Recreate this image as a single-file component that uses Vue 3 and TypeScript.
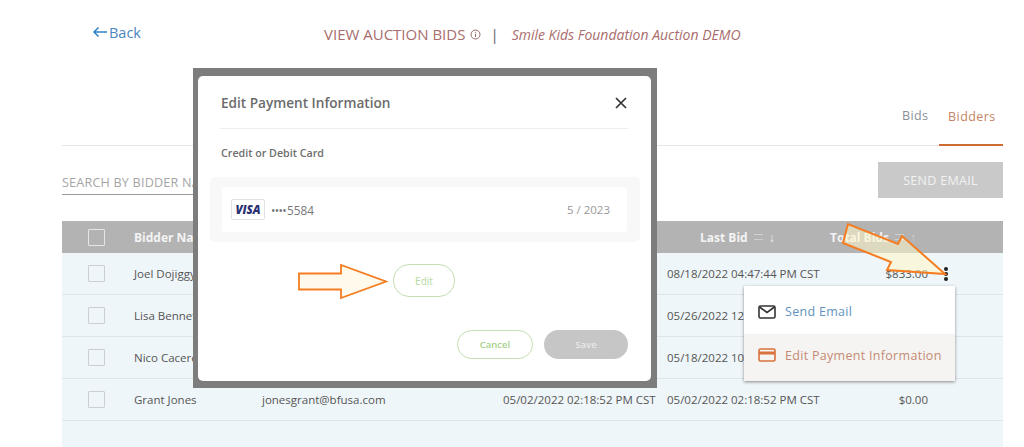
<script setup lang="ts">
interface Row { name: string; email: string; first: string; last: string; total: string; menu?: boolean }
const rows: Row[] = [
  { name: 'Joel Dojiggy', email: '', first: '', last: '08/18/2022 04:47:44 PM CST', total: '$833.00', menu: true },
  { name: 'Lisa Bennett', email: '', first: '', last: '05/26/2022 12', total: '' },
  { name: 'Nico Caceres', email: '', first: '', last: '05/18/2022 10', total: '' },
  { name: 'Grant Jones', email: 'jonesgrant@bfusa.com', first: '05/02/2022 02:18:52 PM CST', last: '05/02/2022 02:18:52 PM CST', total: '$0.00' },
]
</script>

<template>
  <div class="page">
    <header class="top">
      <a class="back"><svg class="back-arrow" width="16" height="12" viewBox="0 0 16 12"><path d="M15 6H2M6.500 1.500 2 6l4.500 4.500" fill="none" stroke="#2f80c8" stroke-width="1.500"/></svg>Back</a>
      <div class="title">
        <span>VIEW AUCTION BIDS</span>
        <svg class="info" width="11" height="11" viewBox="0 0 11 11"><circle cx="5.500" cy="5.500" r="4.500" fill="none" stroke="#9a6a6a"/><path d="M5.500 3v.8M5.500 4.800V8" stroke="#9a6a6a"/></svg>
        <span class="sep">|</span>
        <em>Smile Kids Foundation Auction DEMO</em>
      </div>
    </header>

    <main class="content">
      <nav class="tabs">
        <span class="tab">Bids</span>
        <span class="tab active">Bidders</span>
      </nav>

      <div class="tools">
        <div class="search">SEARCH BY BIDDER NAME</div>
        <button class="send">SEND EMAIL</button>
      </div>

      <section class="table">
        <div class="row head">
          <span class="check"></span>
          <span>Bidder Name</span>
          <span>Email</span>
          <span>First Bid</span>
          <span class="sort last-head">Last Bid <i class="lines"></i> <b>↓</b></span>
          <span class="sort total-head">Total Bids <i class="lines"></i> <b class="dim">↑</b></span>
        </div>
        <div v-for="r in rows" :key="r.name" class="row body">
          <span class="check"></span>
          <span>{{ r.name }}</span>
          <span>{{ r.email }}</span>
          <span>{{ r.first }}</span>
          <span>{{ r.last }}</span>
          <span class="total">{{ r.total }}</span>
          <span v-if="r.menu" class="dots"><i></i><i></i><i></i></span>
        </div>
      </section>
    </main>

    <div class="menu">
      <div class="menu-item first">
        <svg width="18" height="14" viewBox="0 0 18 14"><rect x="1" y="1" width="16" height="12" rx="1.500" fill="none" stroke="#333" stroke-width="1.600"/><path d="M1.500 2 9 7.500 16.500 2" fill="none" stroke="#333" stroke-width="1.600"/></svg>
        <span class="send-link">Send Email</span>
      </div>
      <div class="menu-item hover">
        <svg width="18" height="14" viewBox="0 0 18 14"><rect x="1" y="1" width="16" height="12" rx="1.500" fill="none" stroke="#d9713c" stroke-width="1.600"/><rect x="1" y="3.500" width="16" height="3" fill="#d9713c"/></svg>
        <span>Edit Payment Information</span>
      </div>
    </div>

    <svg class="arrow-tr" width="112" height="60" viewBox="0 0 112 60">
      <path d="M6 2 1 21 49 40 45 48 103 52 60 14 56 22Z" fill="#fff8c8" fill-opacity=".55" stroke="#f57c20" stroke-width="2"/>
    </svg>

    <div class="frame">
      <div class="modal">
        <div class="modal-head">
          <h2>Edit Payment Information</h2>
          <svg class="close" width="14" height="14" viewBox="0 0 14 14"><path d="M2 2 12 12M12 2 2 12" stroke="#333" stroke-width="1.700"/></svg>
        </div>
        <h3>Credit or Debit Card</h3>
        <div class="card-band">
          <div class="card">
            <span class="visa">VISA</span>
            <span class="num"><span class="bullets">••••</span>5584</span>
            <span class="exp">5 / 2023</span>
          </div>
        </div>
        <div class="edit-line"><button class="pill edit">Edit</button></div>
        <div class="actions">
          <button class="pill cancel">Cancel</button>
          <button class="pill save">Save</button>
        </div>
      </div>
    </div>

    <svg class="arrow-edit" width="90" height="36" viewBox="0 0 90 36">
      <path d="M1 9.500H43V1L88 17.500 43 34V25.500H1Z" fill="#fffaec" stroke="#f57c20" stroke-width="1.800"/>
    </svg>
  </div>
</template>

<style>
html, body { margin: 0; background: #fff; }
</style>

<style scoped>
.page {
  position: relative;
  width: 1024px;
  height: 447px;
  overflow: hidden;
  background: #fff;
  font-family: "Open Sans", sans-serif;
  color: #555;
}
.top { display: grid; grid-template-columns: 232px 1fr; height: 68px; padding-left: 92px; }
.back {
  display: flex; align-items: center; gap: 1px; height: 20px; margin-top: 22px;
  color: #4a86c0; font-size: 14.500px; width: max-content;
}
.back-arrow { flex: none; }
.title {
  display: flex; align-items: center; height: 20px; margin-top: 24px;
  color: #a96d6d; font-size: 15px; white-space: nowrap;
}
.info { margin-left: 5px; }
.sep { margin: 0 13px 0 9px; color: #666; }
.title em { font-size: 14px; }
.content { padding: 0 21px 0 62px; }
.tabs {
  display: flex; justify-content: flex-end; align-items: flex-end;
  box-sizing: border-box; height: 78px; border-bottom: 1px solid #e6e6e6;
}
.tab {
  height: 42px; box-sizing: border-box; font-size: 12.500px; color: #8a8f94; letter-spacing: .35px;
  padding-top: 4px; width: 37px;
}
.tab.active {
  width: 64px; padding-left: 9px; color: #c48465; border-bottom: 2px solid #cf6c32; margin-bottom: -1px; letter-spacing: .45px;
}
.tools {
  display: flex; justify-content: space-between; align-items: flex-start;
  height: 75px; padding-top: 16px; box-sizing: border-box;
}
.search {
  width: 150px; height: 33px; line-height: 42px; box-sizing: border-box; border-bottom: 1px solid #999;
  color: #a5a5a5; font-size: 12.600px; white-space: nowrap; letter-spacing: .2px;
}
.send {
  width: 125px; height: 36px; border: 0; padding: 0; background: #c9c9c9; color: #f2f2f2;
  font: 12.500px "Open Sans", sans-serif; letter-spacing: .3px;
}
.table { background: #eff6f9; height: 226px; }
.row {
  position: relative; display: grid; align-items: center;
  grid-template-columns: 46px 128px 241px 164px 218px 1fr;
  box-sizing: border-box; padding-left: 26px;
  font-size: 11.500px; white-space: nowrap;
}
.head { height: 32px; background: #b3b3b3; color: #f4f4f4; font-weight: 700; font-size: 12px; }
.body { height: 42px; border-bottom: 1px solid #dde6ea; color: #555; }
.check {
  width: 17px; height: 17px; box-sizing: border-box; border: 1px solid #c9cfd2; background: #eff6f9; border-radius: 1px;
}
.head .check { background: #b3b3b3; border-color: #e6e6e6; }
.total { width: 43px; text-align: right; }
.sort { display: flex; align-items: center; gap: 6px; }
.sort b { font-weight: 400; color: #f4f4f4; }
.sort b.dim { color: #cfcfcf; }
.lines { display: inline-block; width: 9px; height: 4px; border-top: 1px solid #cfcfcf; border-bottom: 1px solid #cfcfcf; }
.last-head { margin-left: 33px; }
.total-head { margin-left: -55px; }
.dots {
  position: absolute; left: 882px; top: 14px; display: flex; flex-direction: column; gap: 1px;
}
.dots i { display: block; width: 4px; height: 4px; border-radius: 50%; background: #222; }
.menu {
  position: absolute; left: 744px; top: 286px; width: 211px; height: 95px; background: #fff;
  box-shadow: 0 1px 3px rgba(0, 0, 0, .45); display: flex; flex-direction: column; font-size: 12.500px;
}
.menu-item {
  flex: 1; display: flex; align-items: center; gap: 9px; padding-left: 14px; box-sizing: border-box;
  color: #c48a72; letter-spacing: .3px; white-space: nowrap;
}
.menu-item.first { padding-top: 4px; }
.menu-item.hover { background: #f5f4f3; padding-bottom: 4px; }
.send-link { color: #5f92bf; }
.frame {
  position: absolute; left: 193px; top: 68px; width: 464px; height: 320px; background: #7d7d7d;
  box-sizing: border-box; padding: 8px 6px 7px 5px;
}
.modal {
  height: 100%; background: #fff; border-radius: 5px; box-sizing: border-box; padding: 0 23px 0 22px;
  display: flex; flex-direction: column;
}
.modal-head {
  display: flex; justify-content: space-between; align-items: center; height: 53px;
  box-sizing: border-box; padding: 1px 0 0 1px; border-bottom: 1px solid #eee;
}
.modal-head h2 { margin: 0; font-size: 13.600px; font-weight: 600; color: #6b6b6b; }
h3 { margin: 17px 0 0 1px; font-size: 10.700px; font-weight: 600; color: #6e6e6e; height: 15px; line-height: 15px; }
.card-band {
  margin: 16px 0 0 -10px; padding: 10px 13px 11px 12px; background: #f8f8f8; border-radius: 5px;
  width: 430px; box-sizing: border-box; height: 65px;
}
.card { height: 45px; background: #fff; display: flex; align-items: center; padding: 0 17px 0 9px; border-radius: 3px; }
.visa {
  display: flex; align-items: center; justify-content: center; width: 34px; height: 21px; box-sizing: border-box;
  border: 1px solid #e2e2e2; border-radius: 2px; color: #2a2f72; font-size: 11.500px; font-weight: 800; font-style: italic; letter-spacing: -.1px;
}
.num { margin-left: 6px; font-size: 11.800px; color: #777; }
.bullets { letter-spacing: -.7px; margin-right: 1px; }
.exp { margin-left: auto; font-size: 11.500px; color: #999; }
.edit-line { margin-top: 22px; padding-left: 173px; height: 33px; }
.pill {
  padding: 0; font: 600 9.500px "Open Sans", sans-serif; border-radius: 16px; box-sizing: border-box; background: #fff;
}
.edit { width: 62px; height: 33px; border: 1px solid #c3dfb3; color: #b5d7a0; font-weight: 400; font-size: 10px; }
.actions { display: flex; justify-content: flex-end; gap: 11px; margin-top: 33px; }
.cancel { width: 76px; height: 29px; border: 1px solid #c3dfb3; color: #a6d18c; }
.save { width: 84px; height: 29px; border: 0; background: #c6c6c6; color: #e9e9e9; }
.arrow-edit { position: absolute; left: 298px; top: 263.500px; }
.arrow-tr { position: absolute; left: 842px; top: 222px; }
</style>
